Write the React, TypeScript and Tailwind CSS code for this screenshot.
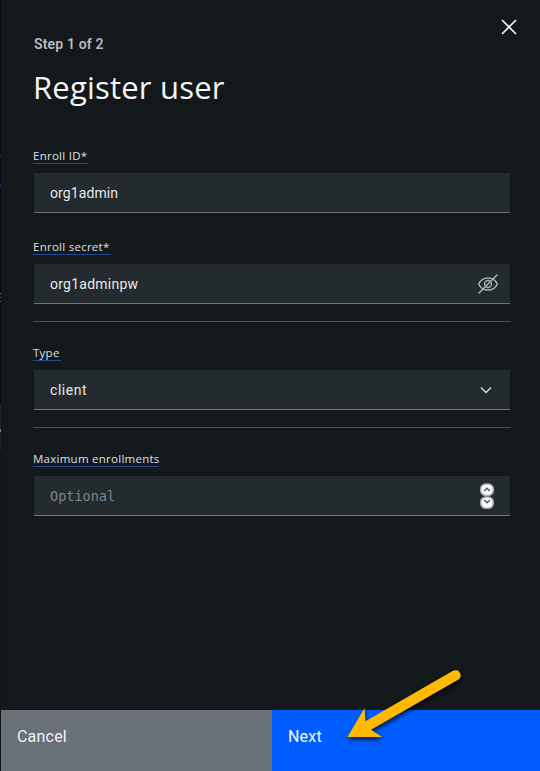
import React from 'react';

type FieldProps = {
  label: string;
  labelClass: string;
  value: string;
  valueClass: string;
  children?: React.ReactNode;
};

function Field({ label, labelClass, value, valueClass, children }: FieldProps) {
  return (
    <div className="flex flex-col items-start">
      <label className={`flex h-[15px] items-start whitespace-nowrap text-[11.5px] leading-4 tracking-[0.26px] text-[#dde1e4] ${labelClass}`}>
        {label}
      </label>
      <div className={`h-px bg-[repeating-linear-gradient(90deg,#0f5dfa_0px_1px,#123a80_1px_2px)] ${labelClass}`} />
      <div className="ml-px mt-[9px] flex h-10 w-[476px] items-center justify-between border-b border-[#6f777d] bg-[#242b2e] pl-4">
        <span className={`whitespace-nowrap leading-5 ${valueClass}`}>{value}</span>
        {children}
      </div>
    </div>
  );
}

function Divider() {
  return <div className="mt-[17px] h-px w-[478px] bg-[#4b5054]" />;
}

function HiddenEye() {
  return (
    <svg className="mr-3" width="20" height="20" viewBox="0 0 20 20" fill="none" stroke="#a6adb3" strokeWidth="1.5">
      <path d="M.7 10C2.4 6 6 3.9 10 3.9S17.6 6 19.3 10C17.6 14 14 16.1 10 16.1S2.4 14 .7 10Z" />
      <circle cx="10" cy="10" r="3.4" />
      <path d="M.5 19.5 19.5.5" />
    </svg>
  );
}

function Stepper() {
  return (
    <svg className="mr-[15px]" width="16" height="28" viewBox="0 0 16 28">
      <rect x="1.7" y="2" width="12.6" height="11.5" rx="5" fill="#fafafa" stroke="#a5a9ab" strokeWidth="1.6" />
      <rect x="1.7" y="15" width="12.6" height="11.3" rx="5" fill="#fafafa" stroke="#a5a9ab" strokeWidth="1.6" />
      <path d="m5.2 9 2.8-2.8L10.8 9M5.2 18l2.8 2.8 2.8-2.8" fill="none" stroke="#555" strokeWidth="1.4" />
    </svg>
  );
}

/* Sliver of the dimmed page that stays visible beside the panel. */
function PageEdge() {
  return (
    <div className="flex w-px shrink-0 flex-col bg-[#080b0d]">
      <div className="mt-[156px] h-px bg-[#4b5054]" />
      <div className="mt-[27px] h-[3px] bg-[#062c7c]" />
      <div className="mt-[106px] h-px bg-[#6f7376]" />
      <div className="mt-[3px] h-px bg-[#6f7376]" />
      <div className="mt-[3px] h-px bg-[#6f7376]" />
      <div className="mt-[101px] h-[47px] bg-[#202426] pt-[26px]">
        <div className="h-[3px] bg-[#74787a]" />
      </div>
      <div className="flex-1 bg-[#101416]" />
    </div>
  );
}

export default function App() {
  return (
    <div className="relative flex h-[771px] w-[540px] overflow-hidden bg-[#13181b] font-['Open_Sans','Noto_Sans',sans-serif]">
      <PageEdge />
      <div className="flex flex-1 flex-col">
        <header className="flex h-[148px] items-start justify-between pl-[33px] pr-[21px]">
          <div className="pt-[34px]">
            <p className="whitespace-nowrap font-['Roboto',sans-serif] text-sm font-semibold leading-5 tracking-[0.16px] text-[#b5bbc0]">Step 1 of 2</p>
            <h1 className="-ml-px mt-[13px] whitespace-nowrap text-[31px] font-normal leading-10 tracking-[0.2px] text-[#f4f4f4]">Register user</h1>
          </div>
          <button aria-label="Close" className="mt-[17px]">
            <svg width="20" height="20" viewBox="0 0 20 20" fill="none" stroke="#f2f2f2" strokeWidth="1.7">
              <path d="m3 3 14 14M17 3 3 17" />
            </svg>
          </button>
        </header>
        <main className="flex flex-1 flex-col items-start pl-8">
          <Field label="Enroll ID*" labelClass="w-[56px]" value="org1admin" valueClass="font-['Roboto',sans-serif] text-sm tracking-[0.1px] text-[#e5e8ea]" />
          <div className="h-[26px]" />
          <Field label="Enroll secret*" labelClass="w-[78px]" value="org1adminpw" valueClass="font-['Roboto',sans-serif] text-sm tracking-[0.25px] text-[#e5e8ea]">
            <HiddenEye />
          </Field>
          <Divider />
          <div className="h-[23px]" />
          <Field label="Type" labelClass="w-[28px]" value="client" valueClass="font-['Roboto',sans-serif] text-sm tracking-[0.55px] text-[#e5e8ea]">
            <svg className="mr-[18px]" width="12" height="8" viewBox="0 0 12 8" fill="none" stroke="#d4d8da" strokeWidth="1.5">
              <path d="m1 1.5 5 5 5-5" />
            </svg>
          </Field>
          <Divider />
          <div className="h-[23px]" />
          <Field label="Maximum enrollments" labelClass="w-[126px]" value="Optional" valueClass="font-['DejaVu_Sans_Mono',monospace] text-[13.5px] text-[#7c8388]">
            <Stepper />
          </Field>
        </main>
        <footer className="flex h-[61px] shrink-0 font-['Roboto',sans-serif] text-base leading-5">
          <button className="flex w-[271px] items-start bg-[#697077] pl-4 pt-[17px] tracking-[0.2px] text-[#eef0f1]">Cancel</button>
          <button className="flex flex-1 items-start bg-[#005dff] pl-4 pt-[17px] tracking-[0.2px] text-[#f4f7ff]">Next</button>
        </footer>
      </div>
      <svg className="pointer-events-none absolute left-[340px] top-[660px] drop-shadow-[1px_3px_2px_rgba(0,0,0,0.65)]" width="130" height="90" viewBox="340 660 130 90">
        <path d="M347.5 737 364.5 708 365.5 721.2 453 670.8A5.2 5.2 0 0 1 458.5 679.6L371 729.8 382 737Z" fill="#ffb900" />
      </svg>
    </div>
  );
}
